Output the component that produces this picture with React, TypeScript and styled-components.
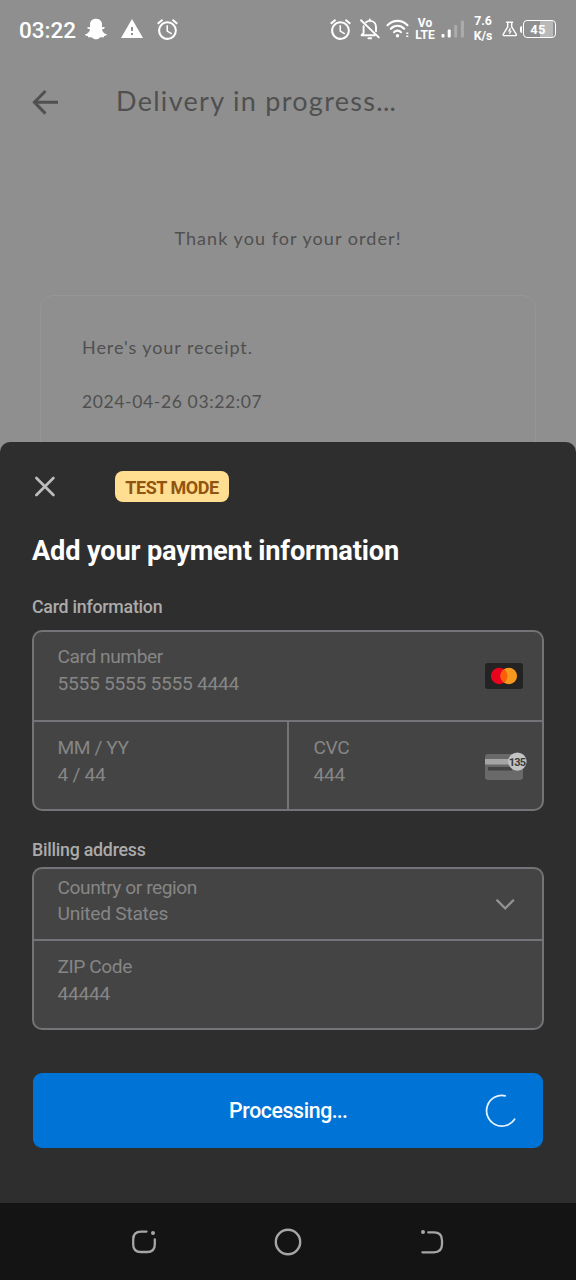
import React from "react";
import styled, { createGlobalStyle } from "styled-components";
import { FaSnapchatGhost } from "react-icons/fa";
import { MdAccessAlarm, MdWarning } from "react-icons/md";

const GlobalStyle = createGlobalStyle`
  * { box-sizing: border-box; }
  body { margin: 0; background: #8f8f8f; font-family: Roboto, "Liberation Sans", sans-serif; }
  svg { display: block; flex: none; }
`;

const Screen = styled.div`
  width: 576px;
  height: 1280px;
  display: flex;
  flex-direction: column;
  overflow: hidden;
  background: #8f8f8f;
`;

const StatusBar = styled.div`
  display: flex;
  align-items: center;
  height: 58px;
  padding: 0 20px 0 19px;
  color: #fff;
`;

const Clock = styled.span`
  width: 65px;
  font-size: 22.5px;
  line-height: 26px;
  font-weight: 500;
  padding-top: 1px;
`;

const StatusItem = styled.span<{ $width: number; $gap?: number }>`
  display: flex;
  justify-content: center;
  flex: none;
  width: ${(p) => p.$width}px;
  margin-left: ${(p) => p.$gap ?? 0}px;
`;

const Spacer = styled.span`
  flex: 1;
`;

const StackedLabel = styled(StatusItem)<{ $size: number; $leading: number }>`
  flex-direction: column;
  align-items: center;
  font-size: ${(p) => p.$size}px;
  line-height: ${(p) => p.$leading}px;
  font-weight: 700;
  white-space: nowrap;
`;

const Battery = styled.span`
  display: flex;
  align-items: center;
  flex: none;
  margin-left: 2px;
`;

const BatteryTip = styled.span`
  width: 2px;
  height: 7px;
  border-radius: 2px 0 0 2px;
  background: #fff;
`;

const BatteryBody = styled.span`
  display: flex;
  align-items: center;
  justify-content: center;
  width: 33px;
  height: 18px;
  margin-left: 1px;
  padding-right: 3px;
  border: 1.5px solid #fff;
  border-radius: 4px;
  font-size: 13px;
  font-weight: 700;
  letter-spacing: 0.4px;
  background: linear-gradient(90deg, transparent 16px, #b9b9b9 16px, #b9b9b9 29px, transparent 29px);
`;

const AppBar = styled.header`
  display: flex;
  align-items: center;
  height: 88px;
  padding-left: 32px;
  color: #505050;
`;

const Geometric = styled.p<{ $size: number; $spacing: number }>`
  margin: 0;
  font-family: Lato, "Open Sans", sans-serif;
  font-size: ${(p) => p.$size}px;
  letter-spacing: ${(p) => p.$spacing}px;
  line-height: 30px;
  color: #505050;
  white-space: nowrap;
`;

const AppTitle = styled(Geometric)`
  margin-left: 58px;
  padding-bottom: 2px;
`;

const Dots = styled.span<{ $spacing: number }>`
  letter-spacing: ${(p) => p.$spacing}px;
`;

const OrderBody = styled.main`
  display: flex;
  flex-direction: column;
  align-items: center;
  height: 296px;
  padding-top: 77px;
  overflow: hidden;
`;

const Receipt = styled.section`
  display: flex;
  flex-direction: column;
  gap: 25px;
  width: 496px;
  height: 170px;
  flex: none;
  margin-top: 42px;
  padding: 36px 41px;
  border: 1px solid #969696;
  border-radius: 14px;
`;

const Sheet = styled.section`
  display: flex;
  flex-direction: column;
  height: 761px;
  padding: 29px 32px 0;
  border-radius: 10px 10px 0 0;
  background: #2e2e2e;
`;

const SheetHeader = styled.div`
  display: flex;
  align-items: center;
  height: 31px;
`;

const TestBadge = styled.span`
  display: flex;
  align-items: center;
  justify-content: center;
  width: 114px;
  height: 31px;
  margin-left: 57px;
  border-radius: 8px;
  background: #ffde92;
  color: #91550f;
  font-size: 18px;
  letter-spacing: -0.45px;
  font-weight: 700;
  padding-top: 1px;
`;

const Heading = styled.h1`
  margin: 33px 0 0;
  font-size: 27.2px;
  letter-spacing: -0.17px;
  line-height: 33px;
  font-weight: 700;
  color: #fff;
  white-space: nowrap;
`;

const SectionLabel = styled.h2<{ $top: number; $bottom: number }>`
  margin: ${(p) => p.$top}px 0 ${(p) => p.$bottom}px;
  font-size: 17.8px;
  letter-spacing: -0.25px;
  line-height: 22px;
  font-weight: 500;
  color: #ababab;
`;

const FieldGroup = styled.div`
  display: flex;
  flex-direction: column;
  border: 2px solid #747478;
  border-radius: 10px;
  background: #444;
  overflow: hidden;
  flex: none;
`;

const FieldRow = styled.div<{ $height: number; $divided?: boolean }>`
  display: flex;
  height: ${(p) => p.$height}px;
  border-bottom: ${(p) => (p.$divided ? "2px solid #747478" : "0")};
`;

const Field = styled.div<{ $width?: number; $top: number; $divided?: boolean }>`
  display: flex;
  justify-content: space-between;
  width: ${(p) => (p.$width ? `${p.$width}px` : "auto")};
  flex: ${(p) => (p.$width ? "none" : "1")};
  padding: ${(p) => p.$top}px 19px 0 23.5px;
  border-right: ${(p) => (p.$divided ? "2px solid #747478" : "0")};
`;

const FieldText = styled.div<{ $leading?: number; $indent?: number }>`
  display: flex;
  flex-direction: column;
  margin-left: ${(p) => p.$indent ?? 0}px;
  font-size: 19.2px;
  line-height: ${(p) => p.$leading ?? 27}px;
  color: #868686;
  white-space: nowrap;
`;

const FieldLabel = styled.span`
  letter-spacing: -0.45px;
`;

const FieldValue = styled.span`
  letter-spacing: -0.28px;
`;

const FieldIcon = styled.span<{ $top: number; $right?: number }>`
  margin-top: ${(p) => p.$top}px;
  margin-right: ${(p) => p.$right ?? 0}px;
`;

const PayButton = styled.button`
  display: grid;
  grid-template-columns: 1fr auto 1fr;
  align-items: center;
  width: 510px;
  height: 75px;
  margin: 43px 0 0 1px;
  padding: 0 25px;
  border: 0;
  border-radius: 9px;
  background: #0074d6;
  color: #fff;
  font-family: inherit;
  font-size: 21.3px;
  letter-spacing: -0.4px;
  font-weight: 500;
`;

const SpinnerSlot = styled.span`
  justify-self: end;
`;

const NavBar = styled.nav`
  display: flex;
  align-items: center;
  justify-content: center;
  gap: 112px;
  height: 77px;
  background: #141414;
`;

const BellOff = () => (
  <svg width="22" height="22" viewBox="0 0 22 22" fill="none" stroke="#fff" strokeWidth="1.9" strokeLinecap="round" strokeLinejoin="round">
    <path d="M2 2.2 19.8 19.4" />
    <path d="M4.6 8.2V15L2.6 17.2H16" />
    <path d="M7 4.2C8 3.3 9.2 2.9 10.8 2.9 14.6 2.9 17 5.6 17 9V13.2" />
    <path d="M10.8 1.4v1.2" />
    <path d="M9.4 20.2h2.8" />
  </svg>
);

const Wifi = () => (
  <svg width="24" height="20" viewBox="0 0 24 20" fill="none" stroke="#fff" strokeWidth="2.1" strokeLinecap="round">
    <path d="M1.5 6.2C7 .4 16 .4 21.5 6.2" />
    <path d="M4.8 9.8c3.8-4 9.8-4 13.4 0" />
    <path d="M8 13.2c2-2.1 5-2.1 7 0" />
    <circle cx="11.5" cy="16.7" r="1.7" fill="#fff" stroke="none" />
    <path d="M20.3 14.2h2M20.3 17.2h2" strokeWidth="1.6" strokeLinecap="butt" />
  </svg>
);

const Signal = () => (
  <svg width="24" height="18" viewBox="0 0 24 18">
    <rect x="0.5" y="14" width="3" height="3.5" rx="1" fill="#fff" />
    <rect x="6.7" y="9.5" width="3" height="8" rx="1" fill="#fff" />
    <rect x="13.2" y="5" width="3" height="12.5" rx="1" fill="#acacac" />
    <rect x="19.9" y="0.5" width="3" height="17" rx="1" fill="#acacac" />
  </svg>
);

const Flask = () => (
  <svg width="16" height="17" viewBox="0 0 16 17" fill="none" stroke="#fff" strokeWidth="1.4" strokeLinejoin="round" strokeLinecap="round">
    <path d="M4.6 1.2h6M5.7 1.4v4.4L1.2 13.4c-.3.7 0 1.2.7 1.2h11.7c.7 0 1-.5.7-1.2L9.7 5.8V1.4" />
    <path d="M8.3 7.4 6.7 10h2.3L7.6 12.4" strokeWidth="1.1" />
  </svg>
);

const BackArrow = () => (
  <svg width="26" height="26" viewBox="0 0 26 26" fill="none" stroke="#505050" strokeWidth="3">
    <path d="M26 13.3H3M13.5 2 2.4 13.3 13.5 24.6" />
  </svg>
);

const Close = () => (
  <svg width="26" height="26" viewBox="0 0 26 26" stroke="#bdbdbd" strokeWidth="2.7" strokeLinecap="round">
    <path d="M4.4 4 21.4 21M21.4 4 4.4 21" />
  </svg>
);

const Mastercard = () => (
  <svg width="38" height="26" viewBox="0 0 38 26">
    <rect width="38" height="26" rx="3" fill="#232323" />
    <circle cx="14.2" cy="13" r="8.3" fill="#e9031c" />
    <circle cx="23.8" cy="13" r="8.3" fill="#f59a1f" />
    <path d="M19 6.2a8.3 8.3 0 0 1 0 13.6 8.3 8.3 0 0 1 0-13.6z" fill="#fb5d09" />
  </svg>
);

const CvcCard = () => (
  <svg width="42" height="28" viewBox="0 0 42 28">
    <rect y="2" width="38" height="26" rx="3" fill="#696969" />
    <rect y="7" width="38" height="5.5" fill="#a5a5a5" />
    <rect x="3" y="15" width="24" height="3.5" fill="#444" />
    <circle cx="32.4" cy="9.6" r="9.2" fill="#c3c3c3" />
    <text x="32" y="13.6" textAnchor="middle" fontFamily="Roboto" fontSize="11" fontWeight="700" letterSpacing="-0.8" fill="#3c3c3c">
      135
    </text>
  </svg>
);

const Chevron = () => (
  <svg width="20" height="12" viewBox="0 0 20 12" fill="none" stroke="#929292" strokeWidth="2.2" strokeLinecap="round">
    <path d="M2.2 2.4 10.2 10.4 18.2 2.4" />
  </svg>
);

const Spinner = () => (
  <svg width="33" height="34" viewBox="0 0 33 34" fill="none" stroke="#e8f4ff" strokeWidth="1.7" strokeLinecap="round">
    <path d="M20.2 1.8A15.3 15.3 0 1 0 29.6 25.2" />
  </svg>
);

const RecentsIcon = () => (
  <svg width="32" height="32" viewBox="0 0 32 32" fill="none" stroke="#a6a6a6" strokeWidth="2.3" strokeLinecap="round">
    <path d="M18.5 5.6H13Q5.2 5.6 5.2 13.4V18.4Q5.2 26 13 26H19Q26.8 26 26.8 18.4V13.4" />
    <circle cx="25" cy="7" r="2" fill="#a6a6a6" stroke="none" />
  </svg>
);

const HomeIcon = () => (
  <svg width="32" height="32" viewBox="0 0 32 32" fill="none" stroke="#a6a6a6" strokeWidth="2.4">
    <circle cx="16" cy="16" r="12.2" />
  </svg>
);

const BackIcon = () => (
  <svg width="32" height="32" viewBox="0 0 32 32" fill="none" stroke="#a6a6a6" strokeWidth="2.3" strokeLinecap="round">
    <path d="M12.2 6.3H18Q26 6.3 26 14.3V18.3Q26 26.3 18 26.3H6.4" />
    <circle cx="7" cy="6.1" r="2" fill="#a6a6a6" stroke="none" />
  </svg>
);

export default function App() {
  return (
    <>
      <GlobalStyle />
      <Screen>
        <StatusBar>
          <Clock>03:22</Clock>
          <StatusItem $width={24}><FaSnapchatGhost size={22} /></StatusItem>
          <StatusItem $width={25} $gap={11}><MdWarning size={24} /></StatusItem>
          <StatusItem $width={25} $gap={11}><MdAccessAlarm size={25} /></StatusItem>
          <Spacer />
          <StatusItem $width={25}><MdAccessAlarm size={25} /></StatusItem>
          <StatusItem $width={25} $gap={4}><BellOff /></StatusItem>
          <StatusItem $width={24} $gap={4}><Wifi /></StatusItem>
          <StackedLabel $width={22} $gap={4} $size={12} $leading={12}>
            <span>Vo</span>
            <span>LTE</span>
          </StackedLabel>
          <StatusItem $width={24} $gap={5}><Signal /></StatusItem>
          <StackedLabel $width={22} $gap={7} $size={12.3} $leading={15}>
            <span>7.6</span>
            <span>K/s</span>
          </StackedLabel>
          <StatusItem $width={16} $gap={8}><Flask /></StatusItem>
          <Battery>
            <BatteryTip />
            <BatteryBody>45</BatteryBody>
          </Battery>
        </StatusBar>
        <AppBar>
          <BackArrow />
          <AppTitle $size={27} $spacing={1.3}>Delivery in progress<Dots $spacing={0.2}>...</Dots></AppTitle>
        </AppBar>
        <OrderBody>
          <Geometric $size={18} $spacing={1.06}>Thank you for your order!</Geometric>
          <Receipt>
            <Geometric $size={18} $spacing={0.92}>Here's your receipt.</Geometric>
            <Geometric $size={17.5} $spacing={0.63}>2024-04-26 03:22:07</Geometric>
          </Receipt>
        </OrderBody>
        <Sheet>
          <SheetHeader>
            <Close />
            <TestBadge>TEST MODE</TestBadge>
          </SheetHeader>
          <Heading>Add your payment information</Heading>
          <SectionLabel $top={28} $bottom={12}>Card information</SectionLabel>
          <FieldGroup>
            <FieldRow $height={90} $divided>
              <Field $top={11}>
                <FieldText>
                  <FieldLabel>Card number</FieldLabel>
                  <FieldValue>5555 5555 5555 4444</FieldValue>
                </FieldText>
                <FieldIcon $top={20}><Mastercard /></FieldIcon>
              </Field>
            </FieldRow>
            <FieldRow $height={87}>
              <Field $width={255} $top={12} $divided>
                <FieldText>
                  <FieldLabel>MM / YY</FieldLabel>
                  <FieldValue>4 / 44</FieldValue>
                </FieldText>
              </Field>
              <Field $top={12}>
                <FieldText $indent={1}>
                  <FieldLabel>CVC</FieldLabel>
                  <FieldValue>444</FieldValue>
                </FieldText>
                <FieldIcon $top={18} $right={-4}><CvcCard /></FieldIcon>
              </Field>
            </FieldRow>
          </FieldGroup>
          <SectionLabel $top={28} $bottom={6}>Billing address</SectionLabel>
          <FieldGroup>
            <FieldRow $height={72} $divided>
              <Field $top={6}>
                <FieldText $leading={26}>
                  <FieldLabel>Country or region</FieldLabel>
                  <FieldValue>United States</FieldValue>
                </FieldText>
                <FieldIcon $top={23} $right={8}><Chevron /></FieldIcon>
              </Field>
            </FieldRow>
            <FieldRow $height={87}>
              <Field $top={12}>
                <FieldText>
                  <FieldLabel>ZIP Code</FieldLabel>
                  <FieldValue>44444</FieldValue>
                </FieldText>
              </Field>
            </FieldRow>
          </FieldGroup>
          <PayButton>
            <span />
            <span>Processing<Dots $spacing={-0.9}>...</Dots></span>
            <SpinnerSlot><Spinner /></SpinnerSlot>
          </PayButton>
        </Sheet>
        <NavBar>
          <RecentsIcon />
          <HomeIcon />
          <BackIcon />
        </NavBar>
      </Screen>
    </>
  );
}
